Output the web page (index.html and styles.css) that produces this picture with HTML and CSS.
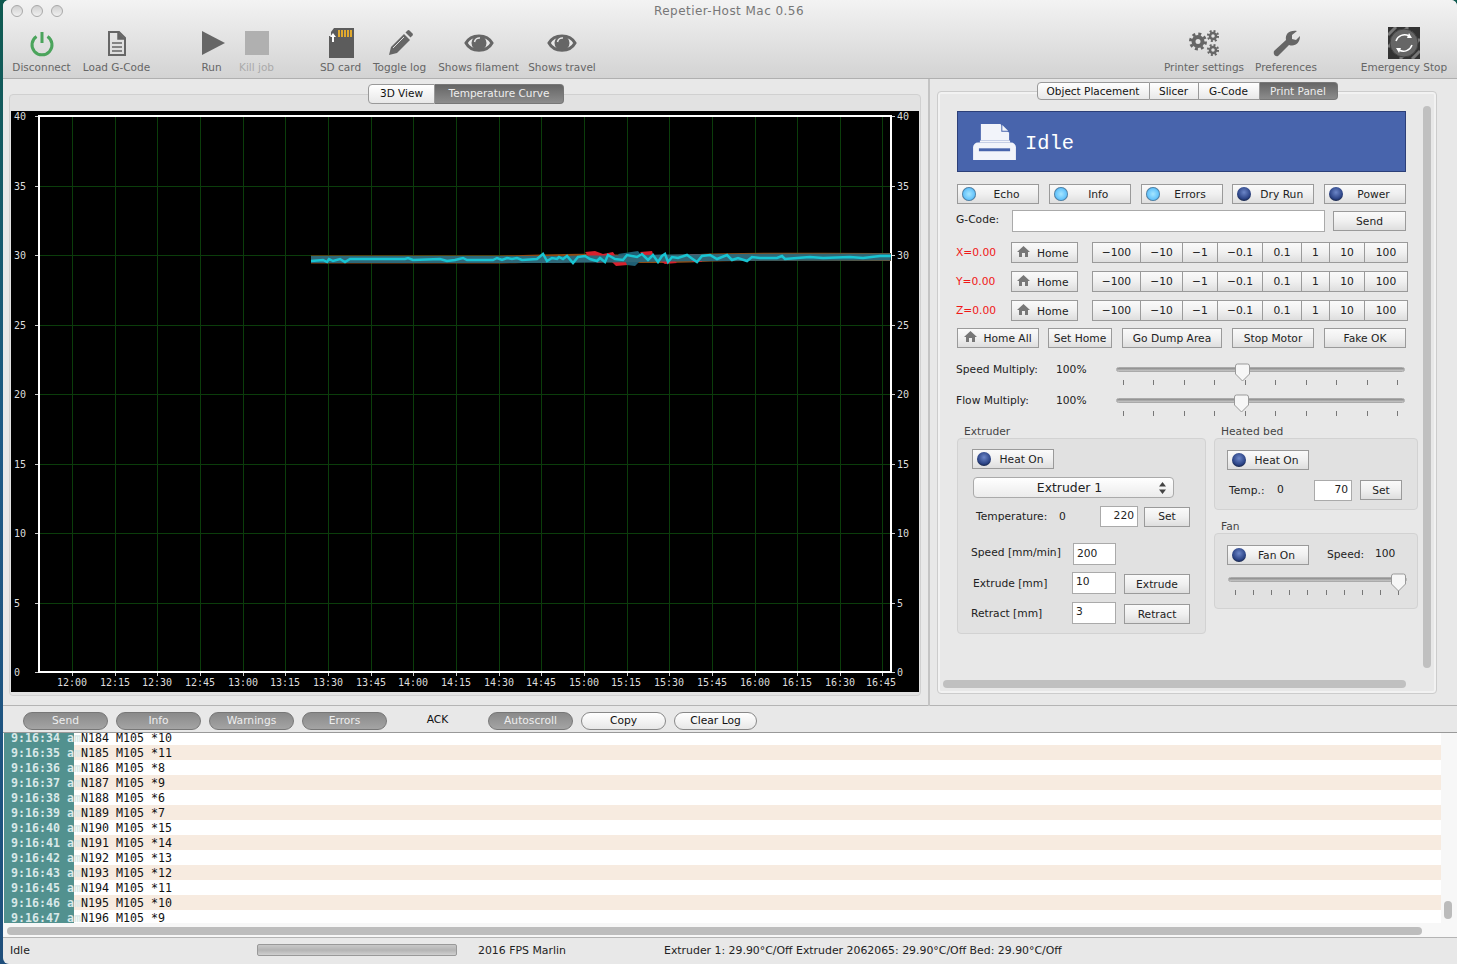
FILE: index.html
```html
<!DOCTYPE html>
<html lang="en">
<head>
    <meta charset="UTF-8">
    <meta name="viewport" content="width=device-width, initial-scale=1.0">
    <title>Repetier-Host Mac 0.56</title>
    <link rel="stylesheet" href="styles.css">
</head>
<body>
    <div class="window">
        <header class="toolbar">
            <div class="titlebar">
                <div class="lights"><span class="light"></span><span class="light"></span><span class="light"></span></div>
                <div class="title">Repetier-Host Mac 0.56</div>
            </div>
            <div class="tools">
                <div class="tool w-69">
                    <svg class="tool-icon" viewBox="0 0 30 30"><path d="M9.5 8.5a10 10 0 1 0 11 0" fill="none" stroke="#4ba45c" stroke-width="3"/><path d="M15 4v11" stroke="#4ba45c" stroke-width="3"/></svg>
                    <span>Disconnect</span>
                </div>
                <div class="tool w-81">
                    <svg class="tool-icon" viewBox="0 0 30 30"><path d="M7 4h10l6 6v17H7z" fill="none" stroke="#666" stroke-width="2"/><path d="M16 4v7h7" fill="#666" stroke="#666" stroke-width="1.5"/><path d="M10 15h10M10 19h10M10 23h10" stroke="#666" stroke-width="1.6"/></svg>
                    <span>Load G-Code</span>
                </div>
                <div class="gap-39"></div>
                <div class="tool w-31">
                    <svg class="tool-icon" viewBox="0 0 30 30"><path d="M5 3l23 12L5 27z" fill="#666"/></svg>
                    <span>Run</span>
                </div>
                <div class="gap-6"></div>
                <div class="tool tool-off w-47">
                    <svg class="tool-icon" viewBox="0 0 30 30"><rect x="3" y="3" width="24" height="24" fill="#b0b0b0"/></svg>
                    <span>Kill job</span>
                </div>
                <div class="gap-35"></div>
                <div class="tool w-51">
                    <svg class="tool-icon" viewBox="0 0 30 30"><path d="M8 0h20v30H3V8l2 0V4z" fill="#5c5c5c"/><path d="M12 2h2v7h-2zM15 2h2v7h-2zM18 2h2v7h-2zM21 2h2v7h-2zM24 2h2v7h-2z" fill="#e0a92e"/><path d="M7 5l3 4H8v5H6V9H4z" fill="#fff"/></svg>
                    <span>SD card</span>
                </div>
                <div class="tool w-67">
                    <svg class="tool-icon" viewBox="0 0 30 30"><path d="M4 27l2-8L19 6l6 6L12 25z" fill="#666"/><path d="M20.500 4.500l2-2a1.500 1.500 0 0 1 2 0l3 3a1.500 1.500 0 0 1 0 2l-2 2z" fill="#666"/><path d="M8 20l11-11" stroke="#ddd" stroke-width="1"/></svg>
                    <span>Toggle log</span>
                </div>
                <div class="tool w-91">
                    <svg class="tool-icon" viewBox="0 0 30 30"><path d="M2 15C7 5.500 23 5.500 28 15C23 24.500 7 24.500 2 15z" fill="#e8e8e8" stroke="#666" stroke-width="3"/><circle cx="15" cy="15" r="7.500" fill="#666"/><path d="M10.500 14a5 5 0 0 1 5.500-4" fill="none" stroke="#e8e8e8" stroke-width="1.500"/></svg>
                    <span>Shows filament</span>
                </div>
                <div class="tool w-76">
                    <svg class="tool-icon" viewBox="0 0 30 30"><path d="M2 15C7 5.500 23 5.500 28 15C23 24.500 7 24.500 2 15z" fill="#e8e8e8" stroke="#666" stroke-width="3"/><circle cx="15" cy="15" r="7.500" fill="#666"/><path d="M10.500 14a5 5 0 0 1 5.500-4" fill="none" stroke="#e8e8e8" stroke-width="1.500"/></svg>
                    <span>Shows travel</span>
                </div>
                <div class="tool-spacer"></div>
                <div class="tool w-92">
                    <svg class="tool-icon" viewBox="0 0 30 30"><g fill="none" stroke="#666"><circle cx="9" cy="13.500" r="4.500" stroke-width="4"/><circle cx="9" cy="13.500" r="7.500" stroke-width="3" stroke-dasharray="2.950 2.950"/><circle cx="24" cy="8" r="3" stroke-width="2.500"/><circle cx="24" cy="8" r="5" stroke-width="2.200" stroke-dasharray="1.960 1.960"/><circle cx="24" cy="22" r="3" stroke-width="2.500"/><circle cx="24" cy="22" r="5" stroke-width="2.200" stroke-dasharray="1.960 1.960"/></g></svg>
                    <span>Printer settings</span>
                </div>
                <div class="tool w-72">
                    <svg class="tool-icon" viewBox="0 0 30 30"><path d="M3 23l12-11C14 6 18 2 26 3l-5 4 0 4 4 1 4-4C29 15 24 19 18 17L7 28C4 29 2 26 3 23z" fill="#666"/></svg>
                    <span>Preferences</span>
                </div>
                <div class="gap-34"></div>
                <div class="tool w-96">
                    <svg class="tool-icon stop-icon" viewBox="0 0 32 32"><rect width="32" height="32" fill="#333"/><path d="M0 8L8 0M0 20L20 0M12 32L32 12M24 32l8-8" stroke="#777" stroke-width="3"/><circle cx="16" cy="16" r="14" fill="#666" stroke="#444"/><path d="M8 14a9 9 0 0 1 13-5M24 18a9 9 0 0 1-13 5" fill="none" stroke="#fff" stroke-width="1.500"/><path d="M21 6l3 5-5 0zM11 26l-3-5 5 0z" fill="#fff"/></svg>
                    <span>Emergency Stop</span>
                </div>
            </div>
        </header>

        <main class="split">
            <section class="left-pane">
                <div class="seg-tabs left-tabs">
                    <span class="seg-tab tab-3d">3D View</span>
                    <span class="seg-tab seg-active tab-temp">Temperature Curve</span>
                </div>
                <div class="left-box">
                    <svg class="chart" viewBox="11 111 908 581" width="908" height="581">
                        <rect x="11" y="111" width="908" height="581" fill="#000"/>
                        <path class="grid" d="M72.500 116V672M115.500 116V672M157.500 116V672M200.500 116V672M243.500 116V672M285.500 116V672M328.500 116V672M371.500 116V672M413.500 116V672M456.500 116V672M499.500 116V672M541.500 116V672M584.500 116V672M627.500 116V672M669.500 116V672M712.500 116V672M755.500 116V672M797.500 116V672M840.500 116V672M882.500 116V672M39 186.500H891M39 255.500H891M39 325.500H891M39 394.500H891M39 464.500H891M39 533.500H891M39 603.500H891"/>
                        <path class="ticks" d="M35 116.500h3M35 186.500h3M35 255.500h3M35 325.500h3M35 394.500h3M35 464.500h3M35 533.500h3M35 603.500h3M35 672.500h3M892 116.500h3M892 186.500h3M892 255.500h3M892 325.500h3M892 394.500h3M892 464.500h3M892 533.500h3M892 603.500h3M892 672.500h3M72.500 673v3M115.500 673v3M157.500 673v3M200.500 673v3M243.500 673v3M285.500 673v3M328.500 673v3M371.500 673v3M413.500 673v3M456.500 673v3M499.500 673v3M541.500 673v3M584.500 673v3M627.500 673v3M669.500 673v3M712.500 673v3M755.500 673v3M797.500 673v3M840.500 673v3M882.500 673v3"/>
                        <rect class="frame" x="39" y="116" width="852" height="556"/>
                        <path class="curve-orange" d="M311 259.500H500C540 259 570 257 600 258S660 260 700 258 800 257 891 257"/>
                        <path d="M585 252l10-1 8 3 10-2 5 8-20 3-8-5zM612 262l14-2 2 5-12 1zM640 252l12-1 2 6-10 0zM690 254l10 0 2 8-10 0zM660 261l14-1 3 3-12 1z" fill="#d8202c"/>
                        <path d="M618 254l20-3 4 5-20 4zM625 260l16 0-6 6-8-1z" fill="#1f5f74"/>
                        <path class="curve-band" d="M311 259.500H560C590 259 630 259 660 258S760 257 891 257"/>
                        <polyline class="curve-line" points="311,261 323,260 327,262 329,259 333,261 340,259 345,262 350,259 367,259 405,259 408,258 413,260 440,259 447,261 455,260 463,258 467,260 493,260 497,258 502,260 507,258 512,259 517,258 522,260 537,259 543,254 547,261 552,258 557,259 559,257 563,259 567,256 573,263 578,257 585,256 590,259 597,261 600,258 605,262 608,255 615,259 623,260 627,255 637,257 642,254 648,260 653,255 658,262 662,256 665,254 668,262 672,257 678,258 687,255 697,262 702,256 710,255 717,259 727,255 732,260 738,258 747,261 752,257 760,258 777,258 782,256 785,259 797,258 810,257 823,258 850,257 863,258 880,256 891,256"/>
                        <g class="chart-text">
                            <text x="14" y="120">40</text><text x="14" y="190">35</text><text x="14" y="259">30</text><text x="14" y="329">25</text><text x="14" y="398">20</text><text x="14" y="468">15</text><text x="14" y="537">10</text><text x="14" y="607">5</text><text x="14" y="676">0</text>
                            <text x="897" y="120">40</text><text x="897" y="190">35</text><text x="897" y="259">30</text><text x="897" y="329">25</text><text x="897" y="398">20</text><text x="897" y="468">15</text><text x="897" y="537">10</text><text x="897" y="607">5</text><text x="897" y="676">0</text>
                        </g>
                        <g class="chart-text chart-times">
                            <text x="72" y="686">12:00</text><text x="115" y="686">12:15</text><text x="157" y="686">12:30</text><text x="200" y="686">12:45</text><text x="243" y="686">13:00</text><text x="285" y="686">13:15</text><text x="328" y="686">13:30</text><text x="371" y="686">13:45</text><text x="413" y="686">14:00</text><text x="456" y="686">14:15</text><text x="499" y="686">14:30</text><text x="541" y="686">14:45</text><text x="584" y="686">15:00</text><text x="626" y="686">15:15</text><text x="669" y="686">15:30</text><text x="712" y="686">15:45</text><text x="755" y="686">16:00</text><text x="797" y="686">16:15</text><text x="840" y="686">16:30</text><text x="881" y="686">16:45</text>
                        </g>
                    </svg>
                </div>
            </section>

            <section class="right-pane">
                <div class="seg-tabs right-tabs">
                    <span class="seg-tab tab-object">Object Placement</span>
                    <span class="seg-tab tab-slicer">Slicer</span>
                    <span class="seg-tab tab-gcode">G-Code</span>
                    <span class="seg-tab seg-active tab-print">Print Panel</span>
                </div>
                <div class="right-box">
                    <div class="vscroll"></div>
                    <div class="hscroll"></div>

                    <div class="banner">
                        <svg class="banner-icon" viewBox="0 0 44 38"><path d="M8 1h20l9 9v8H8z" fill="#f2f4fa"/><path d="M29 1l8 8h-8z" fill="#4864ac"/><path d="M30 2l6 6h-6z" fill="#f2f4fa"/><path d="M7 18h31v2H7z" fill="#f2f4fa"/><path d="M5 20h34a5 5 0 0 1 5 5v13H0V25a5 5 0 0 1 5-5z" fill="#f2f4fa"/><rect x="6" y="26" width="32" height="3" fill="#4864ac"/></svg>
                        <span class="banner-text">Idle</span>
                    </div>

                    <div class="row row-wide mt-12">
                        <div class="btn btn-led"><span class="led led-on"></span><span class="btn-label">Echo</span></div>
                        <div class="btn btn-led"><span class="led led-on"></span><span class="btn-label">Info</span></div>
                        <div class="btn btn-led"><span class="led led-on"></span><span class="btn-label">Errors</span></div>
                        <div class="btn btn-led"><span class="led"></span><span class="btn-label">Dry Run</span></div>
                        <div class="btn btn-led"><span class="led"></span><span class="btn-label">Power</span></div>
                    </div>

                    <div class="gcode-row">
                        <label class="gcode-label">G-Code:</label>
                        <div class="field gcode-input"></div>
                        <div class="btn send-btn">Send</div>
                    </div>

                    <div class="axis-row mt-10">
                        <span class="axis-label">X=0.00</span>
                        <div class="btn home-btn"><svg class="house" viewBox="0 0 13 11"><path d="M6.500 0L13 6h-2v5H8V7H5v4H2V6H0z"/></svg><span>Home</span></div>
                        <div class="jog">
                            <span class="jog-100">−100</span><span class="jog-10">−10</span><span class="jog-1">−1</span><span class="jog-01">−0.1</span><span class="jog-p01">0.1</span><span class="jog-p1">1</span><span class="jog-p10">10</span><span class="jog-p100">100</span>
                        </div>
                    </div>
                    <div class="axis-row mt-8">
                        <span class="axis-label">Y=0.00</span>
                        <div class="btn home-btn"><svg class="house" viewBox="0 0 13 11"><path d="M6.500 0L13 6h-2v5H8V7H5v4H2V6H0z"/></svg><span>Home</span></div>
                        <div class="jog">
                            <span class="jog-100">−100</span><span class="jog-10">−10</span><span class="jog-1">−1</span><span class="jog-01">−0.1</span><span class="jog-p01">0.1</span><span class="jog-p1">1</span><span class="jog-p10">10</span><span class="jog-p100">100</span>
                        </div>
                    </div>
                    <div class="axis-row mt-8">
                        <span class="axis-label">Z=0.00</span>
                        <div class="btn home-btn"><svg class="house" viewBox="0 0 13 11"><path d="M6.500 0L13 6h-2v5H8V7H5v4H2V6H0z"/></svg><span>Home</span></div>
                        <div class="jog">
                            <span class="jog-100">−100</span><span class="jog-10">−10</span><span class="jog-1">−1</span><span class="jog-01">−0.1</span><span class="jog-p01">0.1</span><span class="jog-p1">1</span><span class="jog-p10">10</span><span class="jog-p100">100</span>
                        </div>
                    </div>

                    <div class="row mt-7 actions">
                        <div class="btn act-home"><svg class="house" viewBox="0 0 13 11"><path d="M6.500 0L13 6h-2v5H8V7H5v4H2V6H0z"/></svg><span>Home All</span></div>
                        <div class="btn act-set">Set Home</div>
                        <div class="btn act-dump">Go Dump Area</div>
                        <div class="btn act-stop">Stop Motor</div>
                        <div class="btn act-fake">Fake OK</div>
                    </div>

                    <div class="mult-row mt-12">
                        <span class="mult-label">Speed Multiply:</span>
                        <span class="mult-value">100%</span>
                        <div class="slider">
                            <div class="track"></div>
                            <svg class="thumb thumb-speed" viewBox="0 0 17 19"><path d="M1.500 3a2 2 0 0 1 2-2h10a2 2 0 0 1 2 2v8l-7 7-7-7z" fill="#f6f6f6" stroke="#999"/></svg>
                            <div class="slider-ticks"><i></i><i></i><i></i><i></i><i></i><i></i><i></i><i></i><i></i><i></i></div>
                        </div>
                    </div>
                    <div class="mult-row mt-3">
                        <span class="mult-label">Flow Multiply:</span>
                        <span class="mult-value">100%</span>
                        <div class="slider">
                            <div class="track"></div>
                            <svg class="thumb thumb-flow" viewBox="0 0 17 19"><path d="M1.500 3a2 2 0 0 1 2-2h10a2 2 0 0 1 2 2v8l-7 7-7-7z" fill="#f6f6f6" stroke="#999"/></svg>
                            <div class="slider-ticks"><i></i><i></i><i></i><i></i><i></i><i></i><i></i><i></i><i></i><i></i></div>
                        </div>
                    </div>

                    <div class="groups">
                        <div class="group-left">
                            <div class="group-title">Extruder</div>
                            <div class="group-box ext-box">
                                <div class="btn btn-led"><span class="led"></span><span class="btn-label">Heat On</span></div>
                                <div class="select">
                                    <span>Extruder 1</span>
                                    <svg class="select-arrows" viewBox="0 0 7 12"><path d="M3.500 0L7 4.500H0zM3.500 12L0 7.500h7z"/></svg>
                                </div>
                                <div class="ext-row temp-row">
                                    <span class="temp-label">Temperature:</span>
                                    <span class="temp-value">0</span>
                                    <div class="field field-right temp-input">220</div>
                                    <div class="btn temp-set">Set</div>
                                </div>
                                <div class="ext-row speed-row">
                                    <span class="speed-label">Speed [mm/min]</span>
                                    <div class="field speed-input">200</div>
                                </div>
                                <div class="ext-row extrude-row">
                                    <span class="extrude-label">Extrude [mm]</span>
                                    <div class="field small-input">10</div>
                                    <div class="btn ext-btn">Extrude</div>
                                </div>
                                <div class="ext-row retract-row">
                                    <span class="retract-label">Retract [mm]</span>
                                    <div class="field small-input">3</div>
                                    <div class="btn ext-btn">Retract</div>
                                </div>
                            </div>
                        </div>
                        <div class="group-right">
                            <div class="group-title">Heated bed</div>
                            <div class="group-box bed-box">
                                <div class="btn btn-led"><span class="led"></span><span class="btn-label">Heat On</span></div>
                                <div class="ext-row bed-row">
                                    <span class="bed-label">Temp.:</span>
                                    <span class="bed-value">0</span>
                                    <div class="field field-right temp-input">70</div>
                                    <div class="btn bed-set">Set</div>
                                </div>
                            </div>
                            <div class="group-title fan-title">Fan</div>
                            <div class="group-box fan-box">
                                <div class="fan-row">
                                    <div class="btn btn-led"><span class="led"></span><span class="btn-label">Fan On</span></div>
                                    <span class="fan-speed">Speed:</span>
                                    <span class="fan-value">100</span>
                                </div>
                                <div class="slider fan-slider">
                                    <div class="track"></div>
                                    <svg class="thumb thumb-fan" viewBox="0 0 17 19"><path d="M1.500 3a2 2 0 0 1 2-2h10a2 2 0 0 1 2 2v8l-7 7-7-7z" fill="#f6f6f6" stroke="#999"/></svg>
                                    <div class="slider-ticks"><i></i><i></i><i></i><i></i><i></i><i></i><i></i><i></i><i></i><i></i></div>
                                </div>
                            </div>
                        </div>
                    </div>
                </div>
            </section>
        </main>

        <div class="logbar">
            <span class="pill pill-on">Send</span>
            <span class="pill pill-on">Info</span>
            <span class="pill pill-on">Warnings</span>
            <span class="pill pill-on">Errors</span>
            <span class="pill pill-plain">ACK</span>
            <span class="pill pill-on">Autoscroll</span>
            <span class="pill">Copy</span>
            <span class="pill pill-short">Clear Log</span>
        </div>

        <div class="log-pane">
            <div class="log-list">
                <div class="log-row"><span class="log-time">9:16:34 am</span><span class="log-msg">N184 M105 *10</span></div>
                <div class="log-row"><span class="log-time">9:16:35 am</span><span class="log-msg">N185 M105 *11</span></div>
                <div class="log-row"><span class="log-time">9:16:36 am</span><span class="log-msg">N186 M105 *8</span></div>
                <div class="log-row"><span class="log-time">9:16:37 am</span><span class="log-msg">N187 M105 *9</span></div>
                <div class="log-row"><span class="log-time">9:16:38 am</span><span class="log-msg">N188 M105 *6</span></div>
                <div class="log-row"><span class="log-time">9:16:39 am</span><span class="log-msg">N189 M105 *7</span></div>
                <div class="log-row"><span class="log-time">9:16:40 am</span><span class="log-msg">N190 M105 *15</span></div>
                <div class="log-row"><span class="log-time">9:16:41 am</span><span class="log-msg">N191 M105 *14</span></div>
                <div class="log-row"><span class="log-time">9:16:42 am</span><span class="log-msg">N192 M105 *13</span></div>
                <div class="log-row"><span class="log-time">9:16:43 am</span><span class="log-msg">N193 M105 *12</span></div>
                <div class="log-row"><span class="log-time">9:16:45 am</span><span class="log-msg">N194 M105 *11</span></div>
                <div class="log-row"><span class="log-time">9:16:46 am</span><span class="log-msg">N195 M105 *10</span></div>
                <div class="log-row"><span class="log-time">9:16:47 am</span><span class="log-msg">N196 M105 *9</span></div>
            </div>
            <div class="log-vthumb"></div>
            <div class="log-hscroll"></div>
        </div>

        <footer class="status">
            <span class="status-idle">Idle</span>
            <div class="progress"></div>
            <span class="status-fps">2016 FPS Marlin</span>
            <span>Extruder 1: 29.90°C/Off Extruder 2062065: 29.90°C/Off Bed: 29.90°C/Off</span>
        </footer>
    </div>
</body>
</html>
```

FILE: styles.css
```css
* {
    box-sizing: border-box;
}
html, body {
    margin: 0;
    height: 964px;
    overflow: hidden;
}
body {
    background: linear-gradient(#0f5a50, #1d5a86 45%, #1f4f7c);
    padding-left: 3px;
    font-family: "DejaVu Sans", sans-serif;
    font-size: 10.7px;
    color: #222;
}
.window {
    width: 1454px;
    height: 964px;
    display: flex;
    flex-direction: column;
    background: #e8e8e8;
    border-radius: 6px 6px 0 6px;
    overflow: hidden;
}

/* toolbar */
.toolbar {
    height: 79px;
    flex: none;
    background: linear-gradient(#f3f3f3, #d3d3d3);
    border-bottom: 1px solid #b0b0b0;
}
.titlebar {
    height: 22px;
    display: flex;
    align-items: center;
    position: relative;
    padding-left: 8px;
}
.lights {
    display: flex;
    gap: 8px;
}
.light {
    width: 12px;
    height: 12px;
    border-radius: 50%;
    border: 1px solid #a8a8a8;
    background: linear-gradient(#d0d0d0, #f0f0f0);
}
.title {
    flex: 1;
    text-align: center;
    font-size: 12px;
    color: #777;
    padding-right: 180px;
    padding-left: 180px;
    margin-left: -62px;
    letter-spacing: .45px;
}
.tools {
    display: flex;
    padding: 0 5px 0 4px;
}
.tool {
    display: flex;
    flex-direction: column;
    align-items: center;
    color: #666;
    font-size: 10.5px;
    white-space: nowrap;
    flex: none;
}
.tool span {
    margin-top: 2px;
    line-height: 14px;
}
.tool-off {
    color: #aaa;
}
.tool-icon {
    width: 30px;
    height: 30px;
    margin-top: 6px;
    display: block;
}
.stop-icon {
    width: 32px;
    height: 32px;
    margin-top: 5px;
    margin-bottom: -1px;
}
.w-31 { width: 31px; }
.w-47 { width: 47px; }
.w-51 { width: 51px; }
.w-67 { width: 67px; }
.w-69 { width: 69px; }
.w-72 { width: 72px; }
.w-76 { width: 76px; }
.w-81 { width: 81px; }
.w-91 { width: 91px; }
.w-92 { width: 92px; }
.w-96 { width: 96px; }
.gap-39 { width: 39px; }
.gap-6 { width: 6px; }
.gap-35 { width: 35px; }
.gap-34 { width: 34px; }
.tool-spacer { flex: 1; }

/* main split */
.split {
    height: 627px;
    flex: none;
    display: flex;
    border-bottom: 1px solid #b4b4b4;
}
.left-pane {
    width: 927px;
    flex: none;
    padding: 5px 0 0 6px;
    border-right: 2px solid #c4c4c4;
    height: 627px;
}
.right-pane {
    flex: 1;
    padding: 3px 0 0 7px;
}
.seg-tabs {
    display: flex;
    justify-content: center;
    position: relative;
    z-index: 1;
    height: 20px;
    margin-bottom: -10px;
    width: 912px;
    font-size: 10.5px;
}
.left-tabs {
    padding-left: 2px;
}
.right-tabs {
    width: 500px;
    height: 18px;
    margin-bottom: -9px;
}
.seg-tab {
    display: block;
    text-align: center;
    line-height: 17px;
    background: linear-gradient(#fff, #e8e8e8);
    border: 1px solid #999;
    border-left: none;
    color: #111;
}
.seg-tab:first-child {
    border-left: 1px solid #999;
    border-radius: 4px 0 0 4px;
}
.seg-tab:last-child {
    border-radius: 0 4px 4px 0;
}
.seg-active {
    background: linear-gradient(#666, #8c8c8c);
    color: #eee;
    border-color: #777;
}
.tab-3d { width: 67px; }
.tab-temp { width: 129px; }
.tab-object { width: 113px; }
.tab-slicer { width: 49px; }
.tab-gcode { width: 61px; }
.tab-print { width: 78px; }
.left-box {
    width: 912px;
    height: 602px;
    padding: 16px 1px 0;
    background: #e2e2e2;
    border: 1px solid #d0d0d0;
    border-radius: 4px;
}
.chart {
    display: block;
}
.grid {
    stroke: #0b3d0b;
    stroke-width: 1;
    fill: none;
}
.ticks {
    stroke: #ccc;
    stroke-width: 1;
    fill: none;
}
.frame {
    fill: none;
    stroke: #fff;
    stroke-width: 2;
}
.curve-orange {
    fill: none;
    stroke: #8f4a12;
    stroke-width: 8;
}
.curve-band {
    fill: none;
    stroke: #2f6878;
    stroke-width: 7;
}
.curve-line {
    fill: none;
    stroke: #18c4d2;
    stroke-width: 2.5;
}
.chart-text text {
    font-family: "DejaVu Sans Mono", monospace;
    font-size: 10px;
    fill: #ddd;
}
.chart-times text {
    text-anchor: middle;
}

/* print panel */
.right-box {
    position: relative;
    width: 500px;
    height: 603px;
    padding: 19px 0 0 19px;
    background: #e8e8e8;
    border: 1px solid #ccc;
    border-radius: 4px;
    box-shadow: inset 0 0 0 2px #f2f2f2;
}
.vscroll {
    position: absolute;
    left: 485px;
    top: 14px;
    width: 8px;
    height: 562px;
    background: #c0c0c0;
    border-radius: 4px;
}
.hscroll {
    position: absolute;
    left: 5px;
    top: 588px;
    width: 463px;
    height: 8px;
    background: #c0c0c0;
    border-radius: 4px;
}
.banner {
    width: 449px;
    height: 61px;
    display: flex;
    align-items: center;
    padding-left: 15px;
    background: #4864ac;
    border: 1px solid #2c3f78;
}
.banner-icon {
    width: 43px;
    height: 37px;
}
.banner-text {
    margin: 3px 0 0 9px;
    font-family: "Liberation Mono", monospace;
    font-size: 20.4px;
    color: #fff;
}
.btn {
    height: 20px;
    display: flex;
    align-items: center;
    justify-content: center;
    background: linear-gradient(#fafafa, #f0f0f0 50%, #dedede);
    border: 1px solid #9a9a9a;
    flex: none;
    white-space: nowrap;
}
.btn-led {
    width: 82px;
    justify-content: flex-start;
    padding-left: 4px;
}
.btn-label {
    flex: 1;
    text-align: center;
    padding-right: 1px;
}
.led {
    width: 14px;
    height: 14px;
    flex: none;
    border-radius: 50%;
    margin-top: -1px;
    background: radial-gradient(circle at 50% 38%, #6c86c8, #2c4486 58%, #0e1830 85%);
}
.led-on {
    background: radial-gradient(circle at 50% 50%, #a6e6ff, #66c4fb 55%, #2c4560 75%, #2c4560);
}
.row {
    display: flex;
}
.row-wide {
    width: 449px;
    justify-content: space-between;
}
.mt-3 { margin-top: 3px; }
.mt-7 { margin-top: 7px; }
.mt-8 { margin-top: 8px; }
.mt-10 { margin-top: 10px; }
.mt-12 { margin-top: 12px; }
.gcode-row {
    display: flex;
    align-items: center;
    margin-top: 6px;
    height: 22px;
}
.gcode-label {
    width: 56px;
    margin-left: -1px;
    margin-top: -4px;
}
.gcode-input {
    width: 313px;
    height: 22px;
}
.send-btn {
    width: 73px;
    margin-left: 8px;
}
.field {
    background: #fff;
    border: 1px solid #aaa;
    padding: 0 3px;
    line-height: 18px;
    flex: none;
}
.field-right {
    text-align: right;
}
.axis-row {
    display: flex;
    align-items: center;
    height: 21px;
}
.axis-label {
    width: 55px;
    margin-left: -1px;
    color: #f01818;
}
.home-btn {
    width: 67px;
    height: 21px;
    padding-left: 5px;
    justify-content: flex-start;
}
.home-btn span {
    margin: 2px 0 0 7px;
}
.house {
    width: 13px;
    height: 11px;
    fill: #777;
    flex: none;
    margin-top: -3px;
}
.jog {
    display: flex;
    margin-left: 14px;
    height: 21px;
    border: 1px solid #9a9a9a;
    background: linear-gradient(#fafafa, #f0f0f0 50%, #dedede);
}
.jog span {
    display: block;
    text-align: center;
    line-height: 19px;
    border-right: 1px solid #9a9a9a;
}
.jog span:last-child {
    border-right: none;
}
.jog-100 { width: 48px; }
.jog-10 { width: 42px; }
.jog-1 { width: 35px; }
.jog-01 { width: 45px; }
.jog-p01 { width: 39px; }
.jog-p1 { width: 28px; }
.jog-p10 { width: 35px; }
.jog-p100 { width: 42px; }
.actions {
    gap: 9px;
}
.act-home {
    width: 82px;
    gap: 6px;
}
.act-set { width: 64px; margin-left: 0; }
.act-dump { width: 100px; margin-left: 1px; }
.act-stop { width: 82px; margin-left: 1px; }
.act-fake { width: 82px; margin-left: 1px; }
.mult-row {
    display: flex;
    height: 28px;
    line-height: 20px;
}
.mult-label {
    width: 100px;
    margin-left: -1px;
}
.mult-value {
    width: 60px;
}
.slider {
    position: relative;
    width: 289px;
    padding-top: 7px;
    flex: none;
}
.track {
    height: 5px;
    background: linear-gradient(#8a8a8a, #c8c8c8);
    border-radius: 3px;
    border: 1px solid #aaa;
}
.thumb {
    position: absolute;
    top: 3px;
    width: 17px;
    height: 19px;
}
.thumb-speed { left: 118px; }
.thumb-flow { left: 117px; }
.thumb-fan { left: 162px; }
.slider-ticks {
    display: flex;
    justify-content: space-between;
    padding: 0 7px;
    margin-top: 8px;
}
.slider-ticks i {
    display: block;
    width: 1px;
    height: 5px;
    background: #777;
}
.groups {
    display: flex;
    gap: 8px;
    margin-top: 5px;
}
.group-left {
    width: 249px;
}
.group-right {
    width: 204px;
}
.group-title {
    height: 14px;
    line-height: 16px;
    padding-left: 7px;
    color: #444;
}
.group-box {
    background: #e1e1e1;
    border: 1px solid #d2d2d2;
    border-radius: 4px;
}
.ext-box {
    height: 196px;
    padding: 10px 0 0 14px;
}
.select {
    position: relative;
    width: 201px;
    height: 21px;
    margin: 8px 0 0 1px;
    display: flex;
    align-items: center;
    justify-content: center;
    font-size: 12.4px;
    padding-right: 8px;
    background: linear-gradient(#fff, #ebebeb);
    border: 1px solid #aaa;
    border-radius: 4px;
}
.select-arrows {
    position: absolute;
    right: 7px;
    top: 4px;
    width: 7px;
    height: 12px;
    fill: #444;
}
.ext-row {
    display: flex;
    align-items: center;
}
.temp-row {
    margin: 8px 0 0 4px;
    height: 21px;
}
.temp-label { width: 83px; }
.temp-value { width: 41px; margin-top: -1px; }
.temp-input {
    width: 38px;
    height: 21px;
}
.temp-set {
    width: 46px;
    margin-left: 6px;
}
.speed-row {
    margin: 16px 0 0 -1px;
    height: 22px;
}
.speed-label { width: 102px; margin-top: -4px; }
.speed-input {
    width: 43px;
    height: 22px;
    line-height: 19px;
}
.extrude-row {
    margin: 7px 0 0 1px;
    height: 22px;
}
.extrude-label { width: 99px; }
.small-input {
    width: 44px;
    height: 22px;
    line-height: 17px;
}
.ext-btn {
    width: 66px;
    margin-left: 8px;
    margin-top: 2px;
}
.retract-row {
    margin: 8px 0 0 -1px;
    height: 22px;
}
.retract-label { width: 101px; }
.bed-box {
    height: 72px;
    padding: 11px 0 0 12px;
}
.bed-row {
    margin: 9px 0 0 2px;
    height: 22px;
}
.bed-label { width: 48px; }
.bed-value { width: 37px; margin-top: -1px; }
.bed-set {
    width: 42px;
    margin-left: 8px;
}
.fan-title {
    margin-top: 9px;
}
.fan-box {
    height: 76px;
    padding: 11px 0 0 12px;
}
.fan-row {
    display: flex;
    align-items: center;
}
.fan-speed {
    width: 48px;
    margin-left: 18px;
    margin-top: -2px;
}
.fan-value {
    margin-top: -4px;
}
.fan-slider {
    width: 179px;
    margin: 5px 0 0 1px;
}
.fan-slider .slider-ticks {
    padding-right: 8px;
}

/* log */
.logbar {
    height: 26px;
    flex: none;
    display: flex;
    align-items: center;
    gap: 8px;
    padding: 3px 0 0 20px;
}
.pill {
    width: 85px;
    height: 18px;
    line-height: 16px;
    text-align: center;
    background: linear-gradient(#fff, #e8e8e8);
    border: 1px solid #888;
    border-radius: 9px;
    color: #111;
}
.pill-on {
    background: linear-gradient(#8a8a8a, #a4a4a4);
    color: #eee;
    border-color: #777;
}
.pill-plain {
    background: none;
    border: none;
    color: #111;
}
.pill-short {
    width: 83px;
}
.log-pane {
    position: relative;
    height: 206px;
    flex: none;
    background: #f7f7f7;
    border-top: 1px solid #999;
    border-bottom: 1px solid #b4b4b4;
    padding-left: 1px;
}
.log-list {
    width: 1437px;
    height: 190px;
    overflow: hidden;
    background: #fff;
    font-family: "DejaVu Sans Mono", monospace;
    font-size: 11.65px;
}
.log-row {
    display: flex;
    height: 15px;
    line-height: 17px;
    white-space: nowrap;
}
.log-row:first-child {
    margin-top: -3px;
}
.log-row:nth-child(even) {
    background: #f7ebe0;
}
.log-time {
    width: 70px;
    flex: none;
    padding-left: 7px;
    background: #52918f;
    color: #d8e8e8;
    font-weight: bold;
}
.log-msg {
    margin-left: 7px;
    position: relative;
    color: #111;
}
.log-vthumb {
    position: absolute;
    left: 1441px;
    top: 168px;
    width: 8px;
    height: 18px;
    background: #bbb;
    border-radius: 4px;
}
.log-hscroll {
    position: absolute;
    left: 4px;
    top: 194px;
    width: 1415px;
    height: 8px;
    background: #bdbdbd;
    border-radius: 4px;
}
.status {
    flex: 1;
    display: flex;
    align-items: center;
    padding: 0 0 2px 7px;
    font-size: 10.9px;
}
.status-idle {
    width: 247px;
}
.progress {
    width: 200px;
    height: 12px;
    background: linear-gradient(#c8c8c8, #b4b4b4 50%, #d0d0d0);
    border: 1px solid #999;
    border-radius: 2px;
}
.status-fps {
    width: 186px;
    margin-left: 21px;
}
```
